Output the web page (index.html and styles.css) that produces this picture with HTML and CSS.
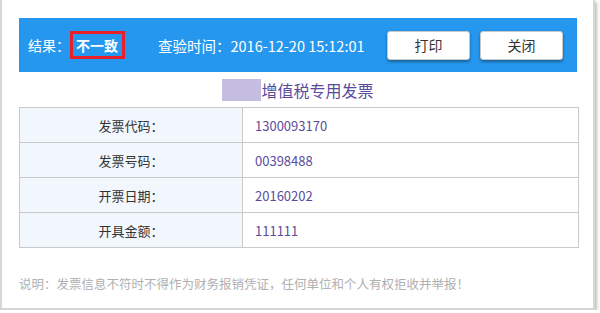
FILE: index.html
```html
<!DOCTYPE html>
<html lang="zh">
<head>
  <meta charset="utf-8" />
  <title>发票查验结果</title>
  <link rel="stylesheet" href="styles.css">
</head>
<body>
  <div class="dialog">
    <div class="result-bar">
      <span class="label">结果<span class="p">：</span></span>
      <span class="result-bad">不一致</span>
      <span class="check-time">查验时间<span class="p">：</span>2016-12-20 15:12:01</span>
      <button class="btn">打印</button>
      <button class="btn">关闭</button>
    </div>
    <div class="invoice-title">
      <span class="mask"></span>增值税专用发票
    </div>
    <table class="info">
      <tr><th>发票代码<span class="p">：</span></th><td>1300093170</td></tr>
      <tr><th>发票号码<span class="p">：</span></th><td>00398488</td></tr>
      <tr><th>开票日期<span class="p">：</span></th><td>20160202</td></tr>
      <tr><th>开具金额<span class="p">：</span></th><td>111111</td></tr>
    </table>
    <p class="note">说明<span class="p">：</span>发票信息不符时不得作为财务报销凭证<span class="p">，</span>任何单位和个人有权拒收并举报<span class="p">！</span></p>
  </div>
</body>
</html>
```
FILE: styles.css
```css
body {
  margin: 0;
  background: #fff;
  font-family: "Noto Sans CJK SC", "Liberation Sans", sans-serif;
}
/* centred full-width punctuation */
.p {
  font-family: "Noto Sans CJK TC", sans-serif;
}
.dialog {
  box-sizing: border-box;
  width: 595px;
  height: 310px;
  padding: 18px 16px 0 17px;
  border: 2px solid #d6d6d6;
  border-top: none;
  box-shadow: 2px 2px 3px rgba(0, 0, 0, 0.25);
}
.result-bar {
  display: flex;
  align-items: center;
  height: 54px;
  padding: 0 14px 0 9px;
  background: #2597ee;
  color: #fff;
  font-size: 14px;
}
.result-bad {
  box-sizing: border-box;
  width: 55px;
  height: 28px;
  line-height: 22px;
  border: 3px solid #e8202a;
  font-weight: bold;
  padding-left: 3px;
}
.check-time {
  margin-left: 33px;
  font-size: 14.5px;
}
.btn {
  box-sizing: border-box;
  width: 83px;
  height: 29px;
  margin-left: 10px;
  background: #fff;
  border: 1px solid #c8c8c8;
  border-radius: 3px;
  box-shadow: 0 2px 3px rgba(0, 0, 0, 0.35);
  font-family: inherit;
  font-size: 14px;
  color: #333;
}
.btn:first-of-type {
  margin-left: auto;
}
.invoice-title {
  display: flex;
  justify-content: center;
  align-items: center;
  height: 35px;
  font-size: 16px;
  color: #5a4c9c;
}
.mask {
  width: 39px;
  height: 22px;
  background: #c5bde2;
}
.info {
  width: 560px;
  border-collapse: collapse;
  font-size: 13px;
}
.info th,
.info td {
  height: 34px;
  padding: 0;
  border: 1px solid #c9c9c9;
}
.info th {
  width: 222px;
  background: #f1f7fc;
  font-weight: normal;
  color: #333;
}
.info td {
  padding-left: 12px;
  color: #5a4c9c;
}
.note {
  margin: 26px 0 0;
  font-size: 12.5px;
  color: #b0b0b0;
}
```
